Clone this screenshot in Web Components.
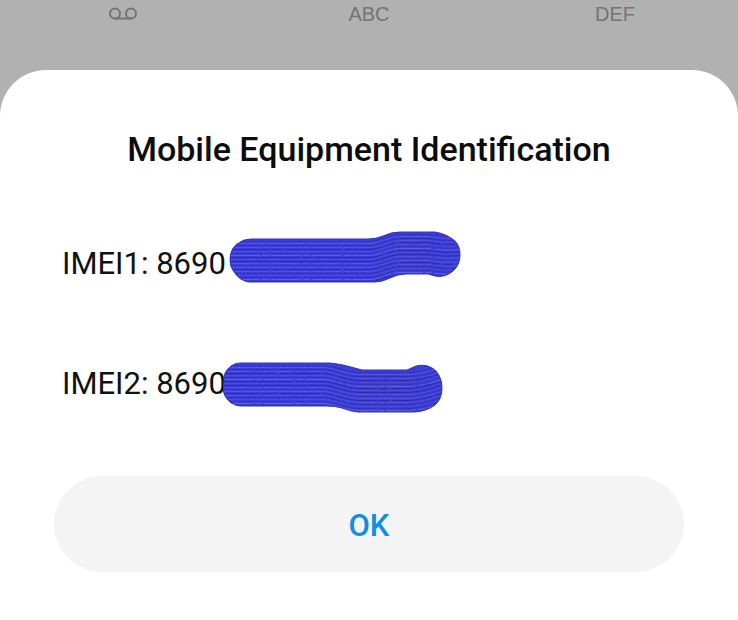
<!DOCTYPE html>
<html lang="en">
<head>
<meta charset="utf-8">
<meta name="viewport" content="width=device-width, initial-scale=1">
<title>Mobile Equipment Identification</title>
<style>
body { margin: 0; background: #b1b1b1; font-family: Roboto, "Liberation Sans", sans-serif; }
</style>
</head>
<body>
<imei-screen></imei-screen>
<script>
class KeypadHints extends HTMLElement {
  constructor() {
    super();
    this.attachShadow({ mode: "open" }).innerHTML = `
      <style>
        :host { display: grid; grid-template-columns: repeat(3, 1fr); justify-items: center; height: 70px; padding-top: 2px; box-sizing: border-box; color: #747474; font: 20px/24px "Liberation Sans", sans-serif; }
        svg { display: block; width: 28px; height: 24px; }
      </style>
      <svg viewBox="0 0 28 24" fill="none" stroke="currentColor" stroke-width="2" role="img" aria-label="Voicemail"><circle cx="6" cy="11.5" r="5"/><circle cx="22" cy="11.5" r="5"/><path d="M6 16.5H22"/></svg>
      <span>ABC</span><span>DEF</span>`;
  }
}
customElements.define("keypad-hints", KeypadHints);

const SHAPES = {
  first: {
    outline: "M21 7H138Q146 7 153 4Q161 0 170 0H205Q217 2 225 9Q230 14 230 23Q230 33 223 39Q215 46 205 44L198 42H176Q168 42 160 46Q152 50 145 50H19Q10 49 4 40Q0 35 0 28Q0 17 7 12Q13 7 21 7Z",
    line: y => `M0 ${y + 7}H138C151 ${y + 7} 158 ${y} 171 ${y}H198Q216 ${y + 3} 232 ${y + 1}`
  },
  second: {
    outline: "M17 0H107Q118 1 128 4L139 7H184L193 3Q205 0 213 8Q219 15 219 25Q219 36 212 42Q204 48 192 49H135Q126 48 119 45Q112 43 104 43H17Q7 42 2 33Q-1 27 1 18Q0 9 8 3Q12 0 17 0Z",
    line: y => `M0 ${y}H99C112 ${y} 122 ${y + 7} 137 ${y + 7}H179Q197 ${y + 8} 221 ${y - 1}`
  }
};

const DARK_DASHES = ["none", "2 1", "40 2 12 3", "3 1 1 1", "70 3 9 2"];

class MarkerStroke extends HTMLElement {
  constructor() { super(); this.attachShadow({ mode: "open" }); }
  connectedCallback() {
    const shape = SHAPES[this.getAttribute("shape")];
    let lines = "";
    for (let i = 0; i < 11; i++) {
      const y = i * 4 + 2;
      lines += `<path d="${shape.line(y + 0.5)}" stroke="#2729a8" stroke-dasharray="${DARK_DASHES[i % 5]}" opacity="${i % 3 ? 0.8 : 0.5}"/>`;
      lines += `<path d="${shape.line(y + 2.5)}" stroke="#6466ea" stroke-dasharray="${i % 2 ? "30 2 7 2" : "2 1"}" opacity="${i % 3 ? 0.5 : 0.8}"/>`;
    }
    this.shadowRoot.innerHTML = `
      <style>:host { display: block; width: 231px; height: 51px; } svg { display: block; overflow: visible; }</style>
      <svg width="231" height="51" viewBox="0 0 231 51" aria-hidden="true">
        <clipPath id="c"><path d="${shape.outline}"/></clipPath>
        <path d="${shape.outline}" fill="#3c3ed6"/>
        <g clip-path="url(#c)" fill="none">${lines}</g>
        <path d="${shape.outline}" fill="none" stroke="#3234b8" stroke-width="1"/>
      </svg>`;
  }
}
customElements.define("marker-stroke", MarkerStroke);

class ImeiEntry extends HTMLElement {
  constructor() {
    super();
    this.attachShadow({ mode: "open" }).innerHTML = `
      <style>
        :host { display: block; position: relative; color: #111; font-size: 31px; line-height: 40px; white-space: nowrap; }
        ::slotted(marker-stroke) { position: absolute; }
      </style>
      <slot></slot><slot name="mark"></slot>`;
  }
}
customElements.define("imei-entry", ImeiEntry);

class PillButton extends HTMLElement {
  constructor() {
    super();
    this.attachShadow({ mode: "open" }).innerHTML = `
      <style>
        :host { display: block; }
        button { display: block; width: 100%; border: 0; border-radius: 48px; padding: 30px 24px 26px; background: #f4f4f4; color: #118ee3; font: 500 31px/40px Roboto, sans-serif; cursor: pointer; }
      </style>
      <button type="button"><slot></slot></button>`;
  }
}
customElements.define("pill-button", PillButton);

class BottomSheet extends HTMLElement {
  constructor() {
    super();
    this.attachShadow({ mode: "open" }).innerHTML = `
      <style>
        :host { display: flex; flex-direction: column; flex: 1; background: #fff; border-radius: 46px 46px 0 0; padding: 55px 54px 48px; box-sizing: border-box; }
        h1 { margin: 0; text-align: center; font-size: 34px; line-height: 48px; font-weight: 500; color: #0c0c0c; }
        .body { display: grid; gap: 80px; padding: 71px 8px 72px; }
      </style>
      <h1><slot name="title"></slot></h1>
      <div class="body"><slot></slot></div>
      <slot name="action"></slot>`;
  }
}
customElements.define("bottom-sheet", BottomSheet);

class ImeiScreen extends HTMLElement {
  constructor() {
    super();
    this.attachShadow({ mode: "open" }).innerHTML = `
      <style>
        :host { display: flex; flex-direction: column; min-height: 100vh; }
        .one { left: 168px; top: -12px; }
        .two { left: 161px; top: -1px; }
      </style>
      <keypad-hints></keypad-hints>
      <bottom-sheet role="dialog" aria-label="Mobile Equipment Identification">
        <span slot="title">Mobile Equipment Identification</span>
        <imei-entry>IMEI1: 8690<marker-stroke class="one" slot="mark" shape="first"></marker-stroke></imei-entry>
        <imei-entry>IMEI2: 8690<marker-stroke class="two" slot="mark" shape="second"></marker-stroke></imei-entry>
        <pill-button slot="action">OK</pill-button>
      </bottom-sheet>`;
  }
}
customElements.define("imei-screen", ImeiScreen);
</script>
</body>
</html>
